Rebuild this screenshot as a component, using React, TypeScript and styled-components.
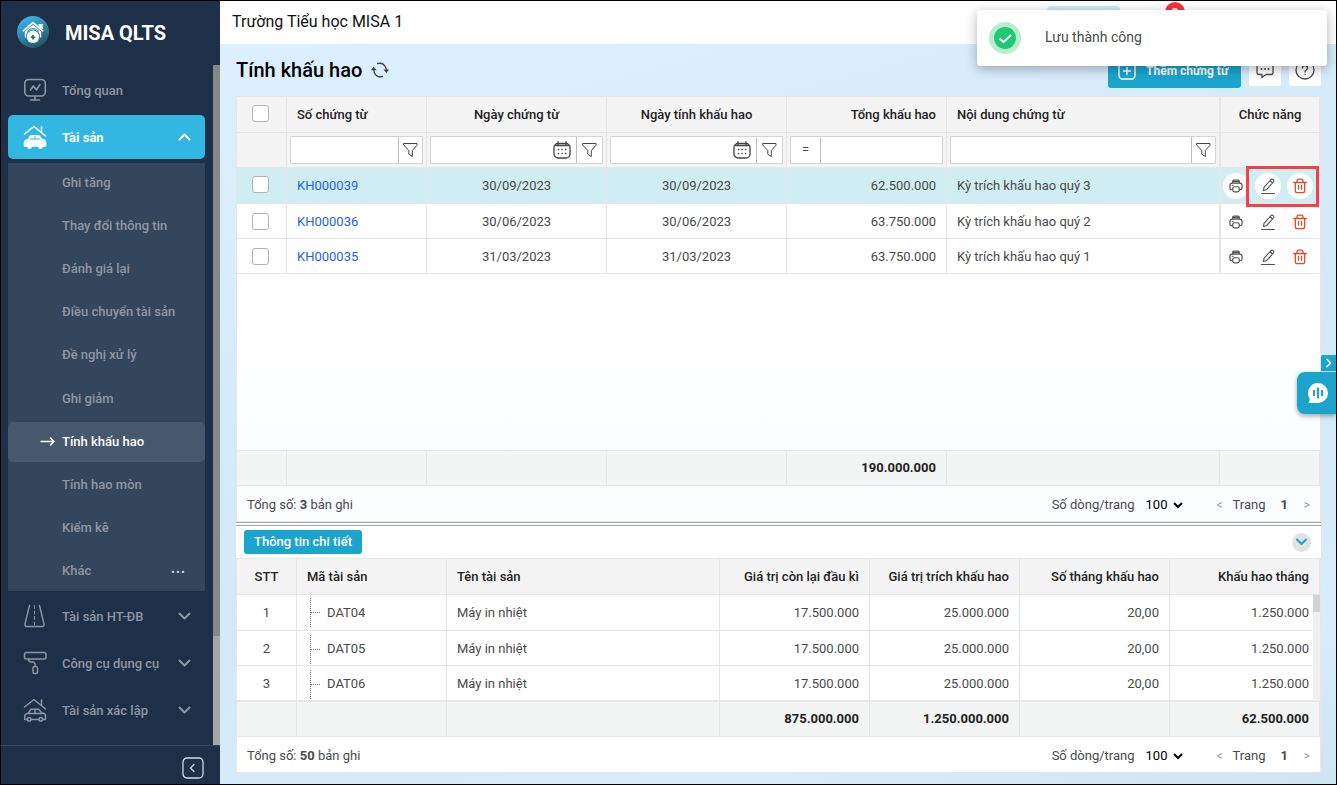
import React from 'react';
import styled, { createGlobalStyle, css } from 'styled-components';

const color = {
  accent: '#1ca5cc',
  line: '#e6e6e6',
  head: '#f4f4f4',
  text: '#4a4a4a',
  dark: '#222222',
  blue: '#2563eb',
  red: '#e0492c',
};

const Global = createGlobalStyle`
  *, *::before, *::after { box-sizing: border-box; }
  body { margin: 0; font-family: Roboto, "Liberation Sans", sans-serif; font-size: 13px; line-height: 20px; color: ${color.text}; }
  button, input, select { font: inherit; color: inherit; margin: 0; }
  button { cursor: pointer; padding: 0; border: 0; background: none; }
  a { text-decoration: none; color: inherit; }
  svg { display: block; flex: none; }
`;

const Page = styled.div`
  position: relative;
  display: flex;
  min-height: 100vh;
  border: 1px solid #000;
  overflow: hidden;
`;

/* ---------- Sidebar ---------- */

const Sidebar = styled.aside`
  flex: none;
  width: 219px;
  display: flex;
  flex-direction: column;
  background: #1d3048;
  color: #8d97a3;
  font-weight: 500;
`;

const Brand = styled.div`
  flex: none;
  height: 64px;
  display: flex;
  align-items: center;
  gap: 16px;
  padding: 0 16px 2px;
  color: #fff;
  font-size: 20px;
  font-weight: 700;
`;

const BrandName = styled.span`
  padding-top: 2px;
`;

const NavArea = styled.div`
  flex: 1;
  display: flex;
`;

const Nav = styled.nav`
  flex: 1;
  display: flex;
  flex-direction: column;
  gap: 3px;
  padding: 3px 8px 0 7px;
`;

const NavLabel = styled.span`
  flex: 1;
`;

const NavItem = styled.a<{ $active?: boolean }>`
  display: flex;
  align-items: center;
  height: 44px;
  padding: 0 14px 0 15px;
  gap: 15px;
  border-radius: 5px;
  ${(p) => p.$active && css`background: #31b7e1; color: #fff; font-weight: 700;`}
  ${NavLabel} { padding-top: 2px; }
`;

const SubMenu = styled.div`
  display: flex;
  flex-direction: column;
  justify-content: space-between;
  height: 428px;
  margin-top: 1px;
  background: #34465c;
`;

const SubItem = styled.a<{ $active?: boolean }>`
  display: flex;
  align-items: center;
  height: 40px;
  padding: 0 20px 0 32px;
  gap: 7px;
  border-radius: 5px;
  ${(p) => p.$active && css`background: #47576c; color: #fff;`}
`;

const Marker = styled.span`
  width: 15px;
`;

const Track = styled.div`
  width: 7px;
  background: #a6a6a8;
`;

const Thumb = styled.div`
  height: 84%;
  background: #858788;
`;

const SideFoot = styled.div`
  flex: none;
  height: 39px;
  display: flex;
  justify-content: flex-end;
  align-items: center;
  padding: 6px 16px 0 0;
  border-top: 1px solid #364960;
  color: #d5dae0;
`;

/* ---------- Main ---------- */

const Main = styled.main`
  flex: 1;
  min-width: 0;
  display: flex;
  flex-direction: column;
  background: linear-gradient(165deg, #def0ff 0%, #d9edfb 20%, #d3e9f7 55%, #d8ecfb 85%, #cfe5f3 100%);
`;

const TopBar = styled.header`
  height: 43px;
  display: flex;
  align-items: flex-start;
  justify-content: space-between;
  padding: 0 151px 0 12px;
  background: #fff;
`;

const School = styled.div`
  line-height: 41px;
  font-size: 16px;
  color: #111;
`;

const TopTools = styled.div`
  display: flex;
  gap: 45px;
  padding-top: 1px;
`;

const Pill = styled.span`
  width: 73px;
  height: 30px;
  margin-top: 4px;
  border-radius: 4px;
  background: #cfeaf2;
`;

const Badge = styled.span`
  width: 20px;
  height: 20px;
  border-radius: 10px;
  background: #f4333f;
  color: #fff;
  font-weight: 700;
  text-align: center;
  line-height: 22px;
`;

const Content = styled.div`
  flex: 1;
  display: flex;
  flex-direction: column;
  padding: 0 15px 11px 16px;
`;

const Heading = styled.div`
  flex: none;
  height: 52px;
  display: flex;
  align-items: center;
  gap: 9px;
`;

const Title = styled.h1`
  margin: 0;
  font-size: 20px;
  line-height: 24px;
  font-weight: 500;
  color: #000;
`;

const Tools = styled.div`
  margin-left: auto;
  display: flex;
  align-items: center;
  gap: 8px;
`;

const AddButton = styled.button`
  display: flex;
  align-items: center;
  gap: 10px;
  height: 36px;
  width: 133px;
  padding: 2px 0 0 10px;
  border-radius: 3px;
  background: ${color.accent};
  color: #fff;
  font-size: 12px;
  font-weight: 700;
  white-space: nowrap;
`;

const SquareButton = styled.button`
  display: grid;
  place-items: center;
  width: 32px;
  height: 32px;
  border-radius: 3px;
  background: #fff;
`;

const Card = styled.section<{ $grow?: boolean }>`
  display: flex;
  flex-direction: column;
  border: 1px solid ${color.line};
  background: #fff;
  ${(p) => p.$grow && css`
    flex: 1;
    background: linear-gradient(#fff 55%, #fafcff);
  `}
`;

const Fill = styled.div`
  flex: 1;
`;

const Table = styled.table`
  width: 100%;
  table-layout: fixed;
  border-collapse: separate;
  border-spacing: 0;
`;

type CellProps = { $align?: 'left' | 'center' | 'right'; $flush?: boolean };

const cell = css<CellProps>`
  height: 35px;
  padding: 0 ${(p) => (p.$flush ? 3 : 10)}px;
  text-align: ${(p) => p.$align || 'left'};
  border-right: 1px solid ${color.line};
  border-bottom: 1px solid ${color.line};
  white-space: nowrap;
`;

const Th = styled.th<CellProps>`
  ${cell}
  tr:first-child > & { height: 36px; }
  background: ${color.head};
  color: ${color.dark};
  font-weight: 500;
`;

const Td = styled.td<CellProps & { $link?: boolean }>`
  ${cell}
  tr:first-child > & { height: 36px; }
  tr:not(:first-child) > & { padding-top: 2px; }
  &:last-child { border-right-color: transparent; }
  ${(p) => p.$link && css`color: ${color.blue};`}
`;

const SumTd = styled.td<CellProps>`
  ${cell}
  background: #f3f4f4;
  color: ${color.dark};
  font-weight: 700;
`;

const ActionTh = styled(Th)`
  border-left: 1px solid ${color.line};
`;

const ActionTd = styled(Td)`
  border-left: 1px solid ${color.line};
  padding: 0 2px;
`;

const BodyRow = styled.tr<{ $selected?: boolean }>`
  ${(p) => p.$selected && css`background: #d0edf2;`}
`;

const SumWrap = styled.div`
  border-top: 1px solid ${color.line};
`;

const Check = styled.input`
  appearance: none;
  display: block;
  width: 17px;
  height: 17px;
  margin: 0 5px 2px;
  border: 1px solid #b3b3b3;
  border-radius: 3px;
  background: #fff;
`;

const FilterBox = styled.div`
  display: flex;
  height: 28px;
  border: 1px solid #d4d4d4;
  border-radius: 1px;
  background: #fff;
  color: #444;
  font-weight: 400;
`;

const FilterInput = styled.input`
  flex: 1;
  min-width: 0;
  width: 0;
  border: 0;
  outline: 0;
  padding: 0 6px;
  background: transparent;
`;

const FilterButton = styled.button<{ $w?: number; $side?: 'left' | 'right' }>`
  display: grid;
  place-items: center;
  width: ${(p) => p.$w || 24}px;
  border-style: solid;
  border-color: #bdbdbd;
  border-width: 0;
  ${(p) => p.$side === 'left' && 'border-left-width: 1px;'}
  ${(p) => p.$side === 'right' && 'border-right-width: 1px;'}
`;

const Actions = styled.div`
  position: relative;
  display: flex;
  gap: 6px;
`;

const RoundButton = styled.button<{ $filled?: boolean; $danger?: boolean }>`
  display: grid;
  place-items: center;
  width: 26px;
  height: 26px;
  border-radius: 13px;
  color: ${(p) => (p.$danger ? color.red : '#505050')};
  ${(p) => p.$filled && css`background: #fff;`}
`;

const Highlight = styled.div`
  position: absolute;
  top: -7px;
  right: -2px;
  width: 73px;
  height: 41px;
  border: 3px solid #f83e47;
  pointer-events: none;
`;

const Pager = styled.div`
  flex: none;
  display: flex;
  align-items: center;
  height: 35px;
  padding: 2px 9px 0 10px;
`;

const PageSize = styled.label`
  margin-left: auto;
  display: flex;
  align-items: center;
  gap: 7px;
`;

const SizeSelect = styled.select`
  width: 44px;
  height: 20px;
  padding: 0;
  border: 0;
  background: transparent;
  color: #000;
`;

const PageNav = styled.div`
  display: flex;
  align-items: center;
  margin-left: 30px;
`;

const PageArrow = styled.button`
  width: 8px;
  font-size: 12px;
  line-height: 20px;
  color: #999;
`;

const PageWord = styled.span`
  margin: 0 15px 0 9px;
`;

const PageNumber = styled.strong`
  margin-right: 15px;
`;

const Splitter = styled.div`
  flex: none;
  height: 4px;
  border: solid #a6a6a6;
  border-width: 1px 0;
  background: #fff;
`;

const DetailHead = styled.div`
  flex: none;
  display: flex;
  align-items: center;
  justify-content: space-between;
  height: 32px;
  padding: 0 10px 0 8px;
  background: #fff;
`;

const DetailTab = styled.button`
  height: 24px;
  padding: 0 10px;
  border-radius: 3px;
  background: ${color.accent};
  color: #fff;
  font-weight: 500;
`;

const Collapse = styled.button`
  display: grid;
  place-items: center;
  width: 19px;
  height: 19px;
  border-radius: 10px;
  background: #e2e2e2;
  color: ${color.accent};
`;

const DetailBody = styled.div`
  position: relative;
  border-bottom: 1px solid ${color.line};
`;

const DetailTrack = styled.div`
  position: absolute;
  right: 0;
  top: 36px;
  bottom: 0;
  width: 7px;
  background: #f1f1f1;
`;

const DetailThumb = styled.div`
  height: 16%;
  background: #d3d3d3;
`;

const Code = styled.div`
  display: flex;
  align-items: center;
  gap: 6px;
  margin-left: 3px;
`;

/* ---------- Overlays ---------- */

const Toast = styled.div`
  position: absolute;
  top: 9px;
  right: 9px;
  width: 350px;
  height: 56px;
  display: flex;
  align-items: center;
  gap: 24px;
  padding-left: 12px;
  border-radius: 4px;
  background: #fff;
  box-shadow: 0 3px 12px rgba(0, 0, 0, 0.3);
  font-size: 14px;
`;

const ToastText = styled.span`
  padding-bottom: 2px;
`;

const SideDock = styled.div`
  position: absolute;
  right: 0;
  top: 354px;
  display: flex;
  flex-direction: column;
  align-items: flex-end;
  gap: 1px;
`;

const DockToggle = styled.button`
  display: grid;
  place-items: center;
  width: 15px;
  height: 16px;
  padding-left: 1px;
  border-radius: 2px 0 0 0;
  background: ${color.accent};
  color: #fff;
`;

const DockChat = styled.button`
  display: grid;
  place-items: center;
  width: 39px;
  height: 42px;
  padding: 0 0 1px 3px;
  border-radius: 8px 0 0 8px;
  background: ${color.accent};
  box-shadow: 0 2px 5px rgba(0, 0, 0, 0.35);
`;

/* ---------- Icons ---------- */

type IconProps = { w: number; h?: number; box?: string; sw?: number; children: React.ReactNode };
const Icon = ({ w, h = w, box, sw = 1.5, children }: IconProps) => (
  <svg width={w} height={h} viewBox={box || `0 0 ${w} ${h}`} fill="none" stroke="currentColor" strokeWidth={sw} strokeLinecap="round" strokeLinejoin="round" aria-hidden="true">
    {children}
  </svg>
);

const LogoIcon = () => (
  <svg width="32" height="32" viewBox="0 0 32 32" aria-hidden="true">
    <defs>
      <linearGradient id="logo" x1="0.2" y1="0" x2="0.7" y2="1">
        <stop offset="0" stopColor="#3cbdf0" />
        <stop offset="1" stopColor="#23525c" />
      </linearGradient>
    </defs>
    <circle cx="16" cy="16" r="16" fill="url(#logo)" />
    <path d="M21.500 8h4.200v5.500l-4.200-3z" fill="#fff" />
    <path d="M6.300 14.800 16 6.600l9.700 8.200" fill="none" stroke="#fff" strokeWidth="1.700" strokeLinecap="round" />
    <path d="M7.800 15.600 16 8.900l8.200 6.700v5.900H7.800z" fill="#fff" />
    <circle cx="16" cy="20.500" r="7.100" fill="#2b8aa6" />
    <circle cx="16" cy="20.800" r="6.200" fill="#fff" />
    <path d="M9.800 15.500q6.200-6 12.400 0" fill="none" stroke="#2b8aa6" strokeWidth="1" />
    <path d="M16 19v4.400M13.800 21.200h4.400" stroke="#1f6478" strokeWidth="1.600" />
  </svg>
);

const MonitorIcon = () => (
  <Icon w={24} sw={1.6}>
    <rect x="1.800" y="1.500" width="20.500" height="16.500" rx="4" />
    <path d="M12 18.500v3.200M7.500 22h9M7.500 12l2.700-4 3.300 3.800L17 6.500" />
  </Icon>
);

const HouseCarIcon = ({ filled }: { filled?: boolean }) => (
  <Icon w={24} sw={1.5}>
    <path d="M1.500 9 11 1.500 22.500 11M18.500 2v5.500" />
    {filled ? (
      <>
        <path d="M5.500 14.500 7.800 10.700h8L19 14.500q3.500.3 3.500 3v3.500h-21v-3q0-3 4-3.500z" fill="currentColor" />
        <circle cx="6.500" cy="21.500" r="1.700" fill="currentColor" />
        <circle cx="17.500" cy="21.500" r="1.700" fill="currentColor" />
        <path d="M7.500 14h9M12 11.500V14" stroke="#31b7e1" strokeWidth="1" />
      </>
    ) : (
      <>
        <path d="M4 21.500H1.700v-3q0-2.500 3.800-3.500l2.300-3.800h7.700l3.500 3.800q3.500.3 3.500 3v3.500h-2.500M8.500 21.500h7M5.500 15.500H19M12 11.500v4" />
        <circle cx="6.200" cy="21.300" r="1.800" />
        <circle cx="17.800" cy="21.300" r="1.800" />
      </>
    )}
  </Icon>
);

const RoadIcon = () => (
  <Icon w={24} sw={1.4}>
    <path d="M6.500 1.500 2 20q-.3 2.500 1.500 2.500h16q1.800 0 1.500-2.500L16.500 1.500" />
    <path d="M11.500 1.500v19" strokeDasharray="3 2.500" strokeWidth="1" />
  </Icon>
);

const RollerIcon = () => (
  <Icon w={24} sw={1.5}>
    <rect x="1.500" y="1.500" width="21.500" height="6.500" rx="2" />
    <path d="M5.500 8q0 3 2.500 3h1.500q2.800 0 2.800 4" />
    <rect x="10" y="15.500" width="4.500" height="7" rx="1.500" />
  </Icon>
);

const Chevron = ({ up }: { up?: boolean }) => (
  <Icon w={13} h={8} sw={2}>
    <path d={up ? 'M1.500 6.500 6.500 1.500l5 5' : 'M1.500 1.500l5 5 5-5'} />
  </Icon>
);

const FunnelIcon = () => (
  <Icon w={15} h={16} sw={1}>
    <path d="M1 1.500h13v1.800L9.300 8.500v6L5.800 12.300V8.500L1 3.300z" />
  </Icon>
);

const CalendarIcon = () => (
  <Icon w={18} sw={1.3}>
    <rect x="1" y="2.500" width="16" height="14.500" rx="4" />
    <path d="M5 .7v3.500M13 .7v3.500M2.500 4.500h13" />
    <path d="M5.500 8.500h.1M9 8.500h.1M12.500 8.500h.1M5.500 12.500h.1M9 12.500h.1M12.500 12.500h.1" strokeWidth="1.600" />
  </Icon>
);

const PrinterIcon = () => (
  <Icon w={14} box="0 0 15 15" sw={1.3}>
    <path d="M4 4V2.500Q4 1.200 5.300 1.200h4.400Q11 1.200 11 2.500V4M4 2.700h7" />
    <path d="M3.500 11.500H3q-2 0-2-2V7q0-2.500 2.500-2.500h8Q14 4.500 14 7v2.500q0 2-2 2h-.5" />
    <rect x="4" y="8.300" width="7" height="5.500" rx="2" />
    <path d="M3.500 6.700h1" />
  </Icon>
);

const PencilIcon = () => (
  <Icon w={16} sw={1.1}>
    <path d="M3.500 12.500 4 9.300 11 1.500q1-.8 2.200.2t.2 2.300L6.500 11.700zM10.200 2.700l2.400 2.300" />
    <path d="M1.500 15.500h13" />
  </Icon>
);

const TrashIcon = () => (
  <Icon w={14} h={16} sw={1.3}>
    <path d="M.7 4.500h12.600M4 4.300V3q0-1.800 1.500-1.800h3Q10 1.200 10 3v1.300M2.300 4.800v7.700q0 2.200 2.200 2.200h5q2.200 0 2.200-2.200V4.800M5.500 7.500v3.700M8.500 7.500v3.700" />
  </Icon>
);

const RefreshIcon = () => (
  <svg width="18" height="16" viewBox="0 0 18 16" fill="none" stroke="#444" strokeWidth="1.400" aria-hidden="true">
    <path d="M6 1.700Q12 -.3 14.800 5.500L15.300 8M12 14.300Q6 16.300 3.200 10.500L2.700 7" />
    <path d="M12.300 7.500H18l-2.500 3.600zM0 8.200h5.700L2.500 4.500z" fill="#444" stroke="none" />
  </svg>
);

/* ---------- Data ---------- */

const subItems = ['Ghi tăng', 'Thay đổi thông tin', 'Đánh giá lại', 'Điều chuyển tài sản', 'Đề nghị xử lý', 'Ghi giảm', 'Tính khấu hao', 'Tính hao mòn', 'Kiểm kê', 'Khác'];

const vouchers = [
  { id: 'KH000039', date: '30/09/2023', total: '62.500.000', note: 'Kỳ trích khấu hao quý 3' },
  { id: 'KH000036', date: '30/06/2023', total: '63.750.000', note: 'Kỳ trích khấu hao quý 2' },
  { id: 'KH000035', date: '31/03/2023', total: '63.750.000', note: 'Kỳ trích khấu hao quý 1' },
];

const assets = ['DAT04', 'DAT05', 'DAT06'];

const VoucherCols = () => (
  <colgroup>
    {[50, 140, 180, 180, 160].map((w, i) => <col key={i} width={w} />)}
    <col />
    <col width={100} />
  </colgroup>
);

const AssetCols = () => (
  <colgroup>
    <col width={60} />
    <col width={150} />
    <col />
    {[1, 2, 3, 4].map((i) => <col key={i} width={150} />)}
  </colgroup>
);

/* ---------- Parts ---------- */

const Filter = ({ label, date }: { label: string; date?: boolean }) => (
  <FilterBox>
    <FilterInput aria-label={label} />
    {date && <FilterButton $w={28} aria-label={`${label}: chọn ngày`}><CalendarIcon /></FilterButton>}
    <FilterButton $side="left" $w={date ? 26 : 24} aria-label={`${label}: lọc`}><FunnelIcon /></FilterButton>
  </FilterBox>
);

const PagerBar = ({ count }: { count: number }) => (
  <Pager>
    <span>Tổng số: <strong>{count}</strong> bản ghi</span>
    <PageSize>
      Số dòng/trang
      <SizeSelect defaultValue="100"><option>100</option></SizeSelect>
    </PageSize>
    <PageNav>
      <PageArrow aria-label="Trang trước">&lt;</PageArrow>
      <PageWord>Trang</PageWord>
      <PageNumber>1</PageNumber>
      <PageArrow aria-label="Trang sau">&gt;</PageArrow>
    </PageNav>
  </Pager>
);

const SidePanel = () => (
  <Sidebar>
    <Brand><LogoIcon /><BrandName>MISA QLTS</BrandName></Brand>
    <NavArea>
      <Nav>
        <NavItem href="#"><MonitorIcon /><NavLabel>Tổng quan</NavLabel></NavItem>
        <NavItem href="#" $active><HouseCarIcon filled /><NavLabel>Tài sản</NavLabel><Chevron up /></NavItem>
        <SubMenu>
          {subItems.map((name) => {
            const active = name === 'Tính khấu hao';
            return (
              <SubItem key={name} href="#" $active={active}>
                <Marker>{active && <Icon w={15} h={9} sw={1.5}><path d="M1 4.500h13M10.500 1 14 4.500 10.500 8" /></Icon>}</Marker>
                <NavLabel>{name}</NavLabel>
                {name === 'Khác' && (
                  <svg width="14" height="4" fill="#c5cbd2" aria-hidden="true">
                    <circle cx="2" cy="3" r="1.300" /><circle cx="7" cy="3" r="1.300" /><circle cx="12" cy="3" r="1.300" />
                  </svg>
                )}
              </SubItem>
            );
          })}
        </SubMenu>
        <NavItem href="#"><RoadIcon /><NavLabel>Tài sản HT-ĐB</NavLabel><Chevron /></NavItem>
        <NavItem href="#"><RollerIcon /><NavLabel>Công cụ dụng cụ</NavLabel><Chevron /></NavItem>
        <NavItem href="#"><HouseCarIcon /><NavLabel>Tài sản xác lập</NavLabel><Chevron /></NavItem>
      </Nav>
      <Track><Thumb /></Track>
    </NavArea>
    <SideFoot>
      <button aria-label="Thu gọn">
        <Icon w={22} sw={1.3}><rect x="1" y="1" width="20" height="20" rx="4" /><path d="M12 7.500 8.500 11l3.500 3.500" /></Icon>
      </button>
    </SideFoot>
  </Sidebar>
);

const VoucherGrid = () => (
  <Card $grow>
    <Table>
      <VoucherCols />
      <thead>
        <tr>
          <Th><Check type="checkbox" aria-label="Chọn tất cả" /></Th>
          <Th>Số chứng từ</Th>
          <Th $align="center">Ngày chứng từ</Th>
          <Th $align="center">Ngày tính khấu hao</Th>
          <Th $align="right">Tổng khấu hao</Th>
          <Th>Nội dung chứng từ</Th>
          <ActionTh $align="center">Chức năng</ActionTh>
        </tr>
        <tr>
          <Th />
          <Th $flush><Filter label="Số chứng từ" /></Th>
          <Th $flush><Filter label="Ngày chứng từ" date /></Th>
          <Th $flush><Filter label="Ngày tính khấu hao" date /></Th>
          <Th $flush>
            <FilterBox>
              <FilterButton $w={30} $side="right" aria-label="Điều kiện lọc">=</FilterButton>
              <FilterInput aria-label="Tổng khấu hao" />
            </FilterBox>
          </Th>
          <Th $flush><Filter label="Nội dung chứng từ" /></Th>
          <ActionTh />
        </tr>
      </thead>
      <tbody>
        {vouchers.map((v, i) => (
          <BodyRow key={v.id} $selected={i === 0}>
            <Td><Check type="checkbox" aria-label={`Chọn ${v.id}`} /></Td>
            <Td $link><a href="#">{v.id}</a></Td>
            <Td $align="center">{v.date}</Td>
            <Td $align="center">{v.date}</Td>
            <Td $align="right">{v.total}</Td>
            <Td>{v.note}</Td>
            <ActionTd>
              <Actions>
                <RoundButton $filled={i === 0} aria-label="In"><PrinterIcon /></RoundButton>
                <RoundButton $filled={i === 0} aria-label="Sửa"><PencilIcon /></RoundButton>
                <RoundButton $filled={i === 0} $danger aria-label="Xóa"><TrashIcon /></RoundButton>
                {i === 0 && <Highlight />}
              </Actions>
            </ActionTd>
          </BodyRow>
        ))}
      </tbody>
    </Table>
    <Fill />
    <SumWrap>
      <Table>
        <VoucherCols />
        <tbody>
          <tr>
            <SumTd /><SumTd /><SumTd /><SumTd />
            <SumTd $align="right">190.000.000</SumTd>
            <SumTd /><SumTd />
          </tr>
        </tbody>
      </Table>
    </SumWrap>
    <PagerBar count={3} />
  </Card>
);

const AssetGrid = () => (
  <Card>
    <DetailBody>
      <Table>
        <AssetCols />
        <thead>
          <tr>
            <Th $align="center">STT</Th>
            <Th>Mã tài sản</Th>
            <Th>Tên tài sản</Th>
            <Th $align="right">Giá trị còn lại đầu kì</Th>
            <Th $align="right">Giá trị trích khấu hao</Th>
            <Th $align="right">Số tháng khấu hao</Th>
            <Th $align="right">Khấu hao tháng</Th>
          </tr>
        </thead>
        <tbody>
          {assets.map((code, i) => (
            <BodyRow key={code}>
              <Td $align="center">{i + 1}</Td>
              <Td>
                <Code>
                  <svg width="11" height="29" viewBox="0 0 11 29" stroke="#777" strokeDasharray="1 1" aria-hidden="true">
                    <path d="M.5 0v29M1 14.500h10" />
                  </svg>
                  {code}
                </Code>
              </Td>
              <Td>Máy in nhiệt</Td>
              <Td $align="right">17.500.000</Td>
              <Td $align="right">25.000.000</Td>
              <Td $align="right">20,00</Td>
              <Td $align="right">1.250.000</Td>
            </BodyRow>
          ))}
        </tbody>
      </Table>
      <DetailTrack><DetailThumb /></DetailTrack>
    </DetailBody>
    <Table>
      <AssetCols />
      <tbody>
        <tr>
          <SumTd /><SumTd /><SumTd />
          <SumTd $align="right">875.000.000</SumTd>
          <SumTd $align="right">1.250.000.000</SumTd>
          <SumTd />
          <SumTd $align="right">62.500.000</SumTd>
        </tr>
      </tbody>
    </Table>
    <PagerBar count={50} />
  </Card>
);

export default function App() {
  return (
    <>
      <Global />
      <Page>
        <SidePanel />
        <Main>
          <TopBar>
            <School>Trường Tiểu học MISA 1</School>
            <TopTools><Pill /><Badge>9</Badge></TopTools>
          </TopBar>
          <Content>
            <Heading>
              <Title>Tính khấu hao</Title>
              <button aria-label="Tải lại"><RefreshIcon /></button>
              <Tools>
                <AddButton>
                  <Icon w={18} sw={1.4}><rect x="1" y="1" width="16" height="16" rx="3.500" /><path d="M9 5.500v7M5.500 9h7" /></Icon>
                  Thêm chứng từ
                </AddButton>
                <SquareButton aria-label="Phản hồi">
                  <Icon w={20} sw={1.3}>
                    <path d="M4 3h12q2 0 2 2v7.500q0 2-2 2h-5L7 17.500v-3H4q-2 0-2-2V5q0-2 2-2z" />
                    <path d="M6.500 9h.1M10 9h.1M13.500 9h.1" strokeWidth="1.800" />
                  </Icon>
                </SquareButton>
                <SquareButton aria-label="Trợ giúp">
                  <Icon w={20} sw={1.3}>
                    <circle cx="10" cy="10" r="9" />
                    <path d="M7.500 8q0-2.500 2.500-2.500T12.500 8q0 1.200-1.300 2T10 12M10 14.500v.1" />
                  </Icon>
                </SquareButton>
              </Tools>
            </Heading>
            <VoucherGrid />
            <Splitter />
            <DetailHead>
              <DetailTab>Thông tin chi tiết</DetailTab>
              <Collapse aria-label="Thu gọn chi tiết"><Icon w={11} h={8} sw={2}><path d="M1 1.500 5.500 6 10 1.500" /></Icon></Collapse>
            </DetailHead>
            <AssetGrid />
          </Content>
        </Main>
        <SideDock>
          <DockToggle aria-label="Mở rộng"><Icon w={6} h={10} sw={1.7}><path d="M1 1.500 4.500 5 1 8.500" /></Icon></DockToggle>
          <DockChat aria-label="Trợ lý">
            <svg width="20" height="20" viewBox="0 0 20 20" aria-hidden="true">
              <path d="M10 0a10 10 0 1 1 0 20H.5Q2 18.500 1.500 15.300A10 10 0 0 1 10 0z" fill="#fff" />
              <path d="M6 7v6M10 4.500v11M14 7v6" stroke={color.accent} strokeWidth="2" />
            </svg>
          </DockChat>
        </SideDock>
        <Toast role="status">
          <svg width="32" height="32" viewBox="0 0 32 32" fill="none" aria-hidden="true">
            <circle cx="16" cy="16" r="16" fill="#b9ecd0" />
            <circle cx="16" cy="16" r="11" fill="#1fc871" />
            <path d="M10.500 16.500 14.500 20l7.500-7" stroke="#fff" strokeWidth="2" />
          </svg>
          <ToastText>Lưu thành công</ToastText>
        </Toast>
      </Page>
    </>
  );
}
